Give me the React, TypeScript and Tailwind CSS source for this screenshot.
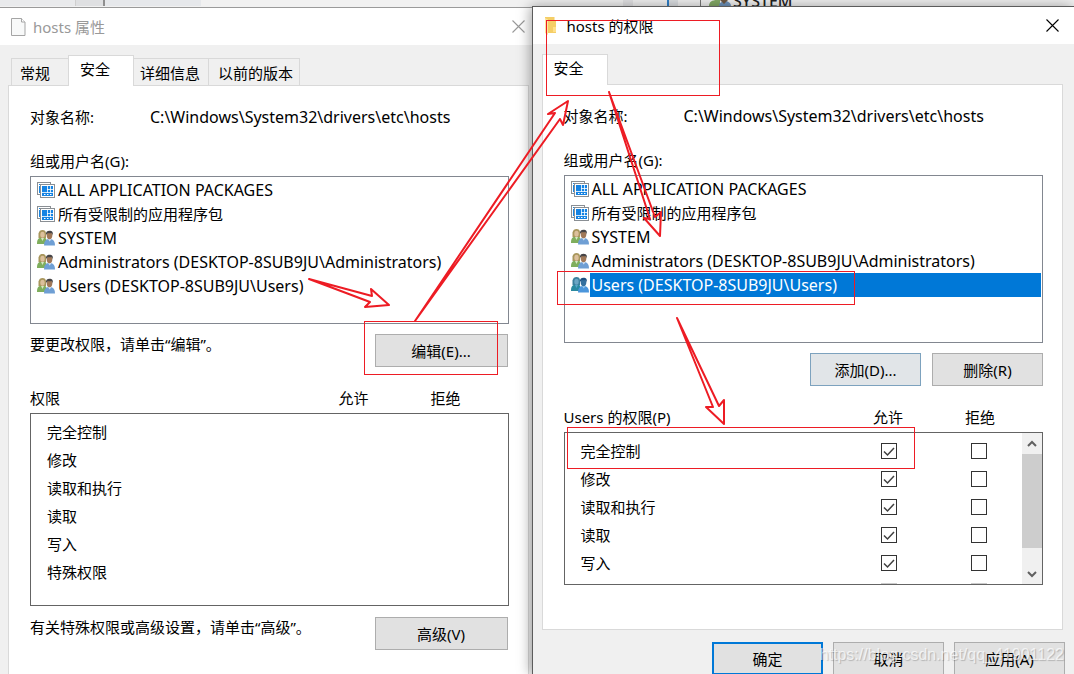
import { useState } from 'react';

type Kind = 'package' | 'users';

const principals: { name: string; kind: Kind; latin?: boolean }[] = [
  { name: 'ALL APPLICATION PACKAGES', kind: 'package', latin: true },
  { name: '所有受限制的应用程序包', kind: 'package' },
  { name: 'SYSTEM', kind: 'users', latin: true },
  { name: 'Administrators (DESKTOP-8SUB9JU\\Administrators)', kind: 'users', latin: true },
  { name: 'Users (DESKTOP-8SUB9JU\\Users)', kind: 'users', latin: true },
];

const permissions = ['完全控制', '修改', '读取和执行', '读取', '写入', '特殊权限'];

function PackageIcon() {
  return (
    <svg width="18" height="16" viewBox="0 0 18 16" className="shrink-0" aria-hidden="true">
      <rect x="0.5" y="0.5" width="13" height="12" fill="#fff" stroke="#8a8f94" />
      <path d="M2 2.500h3M6 2.500h3M10 2.500h2M2.500 4v7" stroke="#1b86e0" fill="none" />
      <rect x="3.5" y="2.5" width="14" height="13" fill="#fff" stroke="#8a8f94" />
      <rect x="5" y="4" width="11" height="10" fill="#1583e3" />
      <path d="M10.500 4v7M13.500 4v7M10 7.500h6M5 10.500h11" stroke="#fff" strokeWidth="0.800" fill="none" />
      <path d="M7 12.500h1.500M10 12.500h1.500M13 12.500h1.500" stroke="#fff" />
    </svg>
  );
}

function UsersIcon({ selected }: { selected?: boolean }) {
  return (
    <svg width="18" height="16" viewBox="0 0 18 16" className="shrink-0" aria-hidden="true">
      <path d="M0 14c0-4 1-6 4-6.500h3c2 .5 3 2 3 6.500z" fill={selected ? '#2a8aa0' : '#7fae5c'} />
      <path d="M4 8l1.500 3L7 8z" fill={selected ? '#5aa5c8' : '#d9e8c5'} />
      <path d="M1.500 8V3.500C2 1 3.500 0 5.500 0s3.500 1 3.500 3.500V8z" fill={selected ? '#3b7f9c' : '#a8965c'} />
      <ellipse cx="5.500" cy="4.800" rx="2.200" ry="3" fill={selected ? '#6ba6c4' : '#dcc09c'} />
      <path d="M7 15.500c0-4 1.500-6 4-6.500h3c2.500.5 4 2.500 4 6.500z" fill={selected ? '#4b96dc' : '#6f9fd4'} />
      <path d="M11 9l1.700 2.500L14.500 9z" fill={selected ? '#9cc8ee' : '#d5e3f3'} />
      <ellipse cx="12.500" cy="5.500" rx="2.800" ry="3.700" fill={selected ? '#34709f' : '#a07858'} />
      <path d="M9 5c-.3-3 1-4.300 3.500-4.300S16.300 2 16 5.500l-1-2.200h-4.500z" fill={selected ? '#1d4f80' : '#464446'} />
    </svg>
  );
}

function CloseButton({ dim }: { dim?: boolean }) {
  return (
    <button type="button" aria-label="关闭" className={dim ? 'text-[#999999]' : 'text-black'}>
      <svg width="13" height="13" viewBox="0 0 13 13" aria-hidden="true">
        <path d="M0.500 0.500l12 12M12.500 0.500l-12 12" stroke="currentColor" strokeWidth="1.100" fill="none" />
      </svg>
    </button>
  );
}

function PushButton({ label, className }: { label: string; className: string }) {
  return (
    <button type="button" className={`h-[33px] shrink-0 ${className}`}>
      {label}
    </button>
  );
}

function PrincipalList({ selected, onSelect, className }: { selected?: number; onSelect?: (i: number) => void; className: string }) {
  return (
    <ul role="listbox" aria-label="组或用户名" className={`mt-[5px] border border-[#828790] bg-white pt-px ${className}`}>
      {principals.map((p, i) => (
        <li
          key={p.name}
          role="option"
          aria-selected={selected === i}
          onClick={() => onSelect?.(i)}
          className="flex h-6 items-center gap-px pl-[6px] pr-px"
        >
          {p.kind === 'package' ? <PackageIcon /> : <UsersIcon selected={selected === i} />}
          <span
            className={`h-6 flex-1 whitespace-nowrap pl-[2px] ${p.latin ? 'text-base leading-6' : 'leading-6'} ${
              selected === i ? 'bg-[#0078d7] text-white' : ''
            }`}
          >
            {p.name}
          </span>
        </li>
      ))}
    </ul>
  );
}

function Check({ id, label, defaultChecked, disabled }: { id: string; label?: string; defaultChecked?: boolean; disabled?: boolean }) {
  return (
    <span className="relative mx-auto block size-4">
      <input
        id={id}
        type="checkbox"
        aria-label={label}
        defaultChecked={defaultChecked}
        disabled={disabled}
        className="peer block size-4 appearance-none border border-[#333333] bg-white disabled:border-[#cccccc]"
      />
      <svg viewBox="0 0 16 16" className="pointer-events-none absolute inset-0 hidden size-4 peer-checked:block" aria-hidden="true">
        <path d="M3 8.500l3.500 3.500L13 5" fill="none" stroke="#404040" strokeWidth="1.500" />
      </svg>
    </span>
  );
}

function NameRow() {
  return (
    <dl className="flex h-5">
      <dt className="w-[120px] shrink-0">对象名称:</dt>
      <dd className="whitespace-nowrap text-base leading-5">C:\Windows\System32\drivers\etc\hosts</dd>
    </dl>
  );
}

function PropertiesWindow() {
  return (
    <section aria-label="hosts 属性" className="mt-px flex min-w-0 flex-[532] flex-col border-t border-[#9a9a9a] bg-[#f0f0f0]">
      <header className="flex h-[37px] shrink-0 items-center bg-white pl-[11px] pr-[7px] text-[#999999]">
        <svg width="15" height="18" viewBox="0 0 15 18" className="mr-[7px]" aria-hidden="true">
          <path d="M0.500 0.500h10l3.500 3.500v13.500h-13.500z" fill="#f8f9f9" stroke="#a5a5a5" />
          <path d="M10.500 0.500v3.500h3.500" fill="#fff" stroke="#a5a5a5" />
        </svg>
        <h1 className="flex-1">hosts 属性</h1>
        <CloseButton dim />
      </header>
      <div className="flex flex-1 flex-col pl-2 pr-[3px] pt-[10px]">
        <div role="tablist" className="flex h-[30px] items-end pl-[3px]">
          <button role="tab" className="h-[27px] w-[57px] border border-r-0 border-b-0 border-[#d9d9d9] pt-px pl-2 text-left">常规</button>
          <button role="tab" aria-selected="true" className="relative -mb-px h-[31px] w-[66px] border border-b-0 border-[#d9d9d9] bg-white pb-1 pl-[11px] text-left">安全</button>
          <button role="tab" className="h-[27px] w-[75px] border border-l-0 border-b-0 border-[#d9d9d9] pt-px pl-[6px] text-left">详细信息</button>
          <button role="tab" className="h-[27px] w-[91px] border border-l-0 border-b-0 border-[#d9d9d9] pt-px pl-[9px] text-left">以前的版本</button>
        </div>
        <div className="flex-1 border border-b-0 border-[#d9d9d9] bg-white pl-[21px] pr-[19px] pt-[21px]">
          <NameRow />
          <p className="mt-6 h-5">组或用户名(G):</p>
          <PrincipalList className="h-[148px]" />
          <div className="mt-[10px] flex justify-between pr-px">
            <p>要更改权限，请单击“编辑”。</p>
            <PushButton label="编辑(E)..." className="w-[133px] border border-[#adadad] bg-[#e1e1e1]" />
          </div>
          <div className="mt-[21px] flex h-5 pr-[17px]">
            <span className="flex-1">权限</span>
            <span className="w-[92px] text-center">允许</span>
            <span className="w-[92px] text-center">拒绝</span>
          </div>
          <ul className="mt-[5px] h-[193px] border border-[#646464] pl-4 pt-1 leading-7">
            {permissions.map((p) => (
              <li key={p}>{p}</li>
            ))}
          </ul>
          <div className="mt-[11px] flex justify-between pr-px">
            <p>有关特殊权限或高级设置，请单击“高级”。</p>
            <PushButton label="高级(V)" className="w-[133px] border border-[#adadad] bg-[#e1e1e1]" />
          </div>
        </div>
      </div>
    </section>
  );
}

function PermissionsWindow() {
  const [selected, setSelected] = useState(4);

  return (
    <section
      aria-label="hosts 的权限"
      className="relative flex min-w-0 flex-[542] flex-col border-t border-l border-[#5c5c5c] bg-[#f0f0f0] shadow-[-2px_0_12px_rgba(0,0,0,0.35)]"
    >
      <header className="flex h-[37px] shrink-0 items-center bg-white pl-3 pr-[15px]">
        <svg width="12" height="18" viewBox="0 0 12 18" className="mr-[10px]" aria-hidden="true">
          <path d="M0 0h9.500v3l1.500 1v12H0z" fill="#f5ce67" />
          <path d="M0 1l3 1.500V18L0 16z" fill="#fde69d" />
          <path d="M8 10h3v5H8z" fill="#ffe08a" />
        </svg>
        <h1 className="flex-1">hosts 的权限</h1>
        <CloseButton />
      </header>
      <div className="pl-[9px] pr-[11px] pt-[10px]">
        <div role="tablist" className="flex h-[30px] items-end">
          <button role="tab" aria-selected="true" className="relative -mb-px h-[31px] w-[66px] border border-b-0 border-[#d9d9d9] bg-white pb-1 pl-[11px] text-left">安全</button>
        </div>
        <div className="h-[546px] border border-[#d9d9d9] bg-white pl-[21px] pr-[19px] pt-[21px]">
          <NameRow />
          <p className="mt-6 h-5">组或用户名(G):</p>
          <PrincipalList selected={selected} onSelect={setSelected} className="h-[168px]" />
          <div className="mt-[10px] flex justify-end gap-[11px]">
            <PushButton label="添加(D)..." className="w-[111px] border border-[#7da2be] bg-[#e1e5e8]" />
            <PushButton label="删除(R)" className="w-[111px] border border-[#adadad] bg-[#e1e1e1]" />
          </div>
          <div className="mt-[21px] flex h-5 pr-[17px]">
            <span className="flex-1">Users 的权限(P)</span>
            <span className="w-[92px] text-center">允许</span>
            <span className="w-[92px] text-center">拒绝</span>
          </div>
          <div className="mt-[5px] flex h-[153px] overflow-hidden border border-[#646464]">
            <div className="flex-1 overflow-hidden pt-1">
              <table className="w-full table-fixed">
                <tbody>
                  {permissions.map((p, i) => (
                    <tr key={p} className="h-7">
                      <td className="pl-4">
                        <label htmlFor={`allow-${i}`}>{p}</label>
                      </td>
                      <td className="w-[90px]">
                        <Check id={`allow-${i}`} defaultChecked={i < 5} disabled={i === 5} />
                      </td>
                      <td className="w-[88px] pl-[2px]">
                        <Check id={`deny-${i}`} label={`拒绝 ${p}`} disabled={i === 5} />
                      </td>
                    </tr>
                  ))}
                </tbody>
              </table>
            </div>
            <div className="flex w-5 flex-col items-center bg-[#f0f0f0]">
              <button type="button" aria-label="向上滚动" className="flex h-[21px] w-full items-center justify-center">
                <svg width="10" height="8" viewBox="0 0 10 8" aria-hidden="true">
                  <path d="M1 6l4-4 4 4" fill="none" stroke="#606060" strokeWidth="2" />
                </svg>
              </button>
              <div className="h-[94px] w-full bg-[#cdcdcd]" />
              <button type="button" aria-label="向下滚动" className="mt-auto flex h-[21px] w-full items-center justify-center">
                <svg width="10" height="8" viewBox="0 0 10 8" aria-hidden="true">
                  <path d="M1 2l4 4 4-4" fill="none" stroke="#606060" strokeWidth="2" />
                </svg>
              </button>
            </div>
          </div>
        </div>
      </div>
      <footer className="mt-3 flex justify-end gap-[10px] pr-[9px]">
        <PushButton label="确定" className="w-[111px] border-2 border-[#0078d7] bg-[#e1e1e1]" />
        <PushButton label="取消" className="w-[111px] border border-[#adadad] bg-[#e1e1e1]" />
        <PushButton label="应用(A)" className="w-[111px] border border-[#adadad] bg-[#e1e1e1]" />
      </footer>
    </section>
  );
}

// red marks drawn over both windows
function Annotations() {
  return (
    <svg width="1074" height="674" viewBox="0 0 1074 674" className="pointer-events-none absolute top-0 left-0" aria-hidden="true">
      <g fill="none" stroke="#ed1c24">
        <rect x="546.500" y="20.500" width="173" height="75" />
        <rect x="364.500" y="321.500" width="133" height="53" />
        <rect x="557.500" y="271.500" width="297" height="33" />
        <rect x="567.500" y="427.500" width="347" height="41" />
      </g>
      <g fill="none" stroke="#ed1c24" strokeWidth="2" strokeLinejoin="round">
        <path d="M309 279L372 296L371 289L389 305L365 307L370 302Z" />
        <path d="M415 321L555 113L548 114L568 101L563 125L560 119Z" />
        <path d="M609 92L650 219L644 218L660 236L661 212L655 217Z" />
        <path d="M677 318L713 407L706 407L724 424L724 400L719 406Z" />
      </g>
    </svg>
  );
}

function BackgroundStrip() {
  return (
    <div className="flex h-[6px] shrink-0 overflow-hidden bg-[#f1f1f1]" aria-hidden="true">
      <div className="w-[76px] border-r border-[#cfcfcf] bg-[#e9eaec]" />
      <div className="w-[29px] border-r-2 border-[#8f8f8f] bg-[#dfe0e2]" />
      <div className="w-[96px] bg-[#e6e8eb]" />
      <div className="flex-1" />
      <div className="w-[10px] bg-[#e2e2e4]" />
      <div className="w-[34px]" />
      <div className="w-[11px] border-l-2 border-[#2f7fc8] bg-[#dcdfe2]" />
      <div className="w-[22px]" />
      <div className="flex w-[374px] border-l border-[#777777] bg-[#f1f1f1] pl-[8px]">
        <svg width="22" height="6" viewBox="0 0 22 6">
          <path d="M0 6c0-4 3-6 8-6h3v6z" fill="#84ab67" />
          <path d="M10 6c0-3 3-5 6-5s6 2 6 5z" fill="#6f94bd" />
          <path d="M11 0h8l-4 4z" fill="#6d5844" />
        </svg>
        <span className="-mt-[9px] pl-[2px] text-base font-medium leading-5 text-[#222222]">SYSTEM</span>
      </div>
    </div>
  );
}

export default function App() {
  return (
    <main className="relative flex h-screen flex-col overflow-hidden font-['Noto_Sans','Noto_Sans_CJK_SC',sans-serif] text-[15px] leading-5 text-black">
      <BackgroundStrip />
      <div className="flex min-h-0 flex-1 bg-[#f1f1f1]">
        <PropertiesWindow />
        <PermissionsWindow />
      </div>
      <Annotations />
      <p className="pointer-events-none absolute right-[10px] bottom-[9px] font-['Liberation_Sans',sans-serif] text-base leading-5 text-white/70 [text-shadow:1px_1px_1px_rgba(0,0,0,0.2)]">
        https://blog.csdn.net/qq_41901122
      </p>
    </main>
  );
}
